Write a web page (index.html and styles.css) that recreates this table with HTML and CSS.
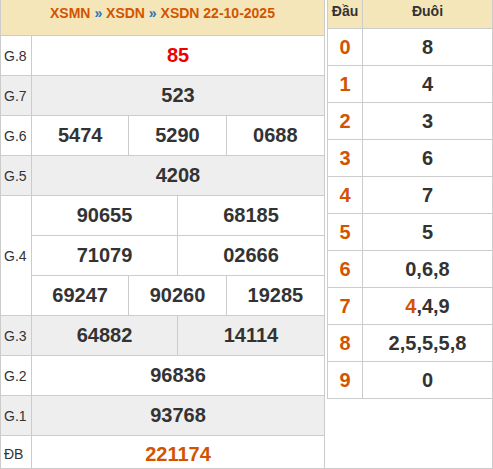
FILE: index.html
```html
<!DOCTYPE html>
<html lang="vi">
<head>
<meta charset="utf-8">
<title>XSDN 22-10-2025</title>
<link rel="stylesheet" href="styles.css">
</head>
<body>
<div class="wrap">
  <div class="results">
    <div class="head">
      <span class="crumb">XSMN</span> <span class="sep">»</span> <span class="crumb">XSDN</span> <span class="sep">»</span> <span class="crumb">XSDN 22-10-2025</span>
    </div>
    <div class="row">
      <div class="label">G.8</div>
      <div class="vals"><div class="cell red">85</div></div>
    </div>
    <div class="row alt">
      <div class="label">G.7</div>
      <div class="vals"><div class="cell">523</div></div>
    </div>
    <div class="row">
      <div class="label">G.6</div>
      <div class="vals three"><div class="cell">5474</div><div class="cell">5290</div><div class="cell">0688</div></div>
    </div>
    <div class="row alt">
      <div class="label">G.5</div>
      <div class="vals"><div class="cell">4208</div></div>
    </div>
    <div class="row tall">
      <div class="label">G.4</div>
      <div class="stack">
        <div class="vals two sub"><div class="cell">90655</div><div class="cell">68185</div></div>
        <div class="vals two sub"><div class="cell">71079</div><div class="cell">02666</div></div>
        <div class="vals three sub"><div class="cell">69247</div><div class="cell">90260</div><div class="cell">19285</div></div>
      </div>
    </div>
    <div class="row alt">
      <div class="label">G.3</div>
      <div class="vals two"><div class="cell">64882</div><div class="cell">14114</div></div>
    </div>
    <div class="row">
      <div class="label">G.2</div>
      <div class="vals"><div class="cell">96836</div></div>
    </div>
    <div class="row alt">
      <div class="label">G.1</div>
      <div class="vals"><div class="cell">93768</div></div>
    </div>
    <div class="row last">
      <div class="label">ĐB</div>
      <div class="vals"><div class="cell orange">221174</div></div>
    </div>
  </div>
  <div class="side">
    <div class="loto">
      <div class="lrow lhead"><div class="dau">Đầu</div><div class="duoi">Đuôi</div></div>
      <div class="lrow"><div class="dau">0</div><div class="duoi">8</div></div>
      <div class="lrow"><div class="dau">1</div><div class="duoi">4</div></div>
      <div class="lrow"><div class="dau">2</div><div class="duoi">3</div></div>
      <div class="lrow"><div class="dau">3</div><div class="duoi">6</div></div>
      <div class="lrow"><div class="dau">4</div><div class="duoi">7</div></div>
      <div class="lrow"><div class="dau">5</div><div class="duoi">5</div></div>
      <div class="lrow"><div class="dau">6</div><div class="duoi">0,6,8</div></div>
      <div class="lrow"><div class="dau">7</div><div class="duoi"><span class="hl">4</span>,4,9</div></div>
      <div class="lrow"><div class="dau">8</div><div class="duoi">2,5,5,5,8</div></div>
      <div class="lrow"><div class="dau">9</div><div class="duoi">0</div></div>
    </div>
  </div>
</div>
</body>
</html>
```
FILE: styles.css
```css
* { box-sizing: border-box; }
html, body { margin: 0; padding: 0; background: #fff; }
body { font-family: "Liberation Sans", Arial, sans-serif; color: #333; }

.wrap {
  display: flex;
  align-items: stretch;
  width: 493px;
  height: 469px;
  border-bottom: 1px solid #ccc;
  overflow: hidden;
}

.results {
  width: 325px;
  flex: none;
  border-left: 1px solid #ccc;
  border-right: 1px solid #ccc;
}

.head {
  height: 36px;
  background: #f5e6b9;
  border-bottom: 1px solid #ccc;
  text-align: center;
  font-size: 14px;
  font-weight: bold;
  line-height: 18px;
  padding-top: 4px;
}
.crumb { color: #d35400; }
.sep { color: #2a72b8; }

.row {
  display: flex;
  height: 40px;
  border-bottom: 1px solid #ccc;
}
.row.tall { height: 120px; }
.row.last { height: 37px; }
.row.alt { background: #eee; }

.label {
  width: 31px;
  flex: none;
  border-right: 1px solid #ccc;
  font-size: 14px;
  padding-left: 3px;
  display: flex;
  align-items: center;
}

.stack { flex: 1; display: flex; flex-direction: column; }

.vals {
  flex: 1;
  display: grid;
  grid-template-columns: 1fr;
}
.vals.two { grid-template-columns: 1fr 1fr; }
.vals.three { grid-template-columns: 1fr 1fr 1fr; }
.vals.sub { border-bottom: 1px solid #ccc; }
.vals.sub:last-child { border-bottom: 0; }

.cell {
  display: flex;
  align-items: center;
  justify-content: center;
  font-size: 20px;
  font-weight: bold;
  border-right: 1px solid #ccc;
}
.cell:last-child { border-right: 0; }
.cell.red { color: #ee0000; }
.cell.orange { color: #d35400; }

.side {
  flex: 1;
  margin-left: 2px;
  border-right: 1px solid #ccc;
}

.loto { border-left: 1px solid #ccc; }

.lrow {
  display: flex;
  height: 37px;
  border-bottom: 1px solid #ccc;
}
.lrow.lhead {
  height: 29px;
  background: #f5e6b9;
  font-size: 14px;
  font-weight: bold;
  line-height: 18px;
}
.lrow.lhead .dau, .lrow.lhead .duoi {
  color: #333;
  font-size: 14px;
  align-items: flex-start;
  padding-top: 2px;
}

.dau {
  width: 35px;
  flex: none;
  border-right: 1px solid #ccc;
  display: flex;
  align-items: center;
  justify-content: center;
  font-size: 20px;
  font-weight: bold;
  color: #d35400;
}
.duoi {
  flex: 1;
  display: flex;
  align-items: center;
  justify-content: center;
  font-size: 20px;
  font-weight: bold;
  color: #333;
}
.hl { color: #d35400; }
```
